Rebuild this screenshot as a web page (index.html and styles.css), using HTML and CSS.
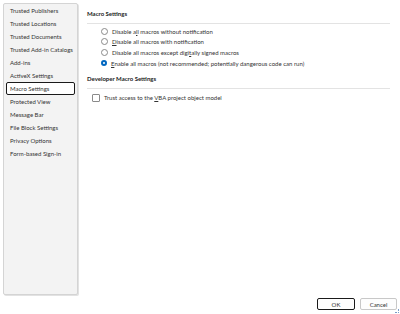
FILE: index.html
```html
<!DOCTYPE html>
<html lang="en">
<head>
    <meta charset="UTF-8">
    <title>Trust Center</title>
    <link rel="stylesheet" href="styles.css">
</head>
<body>

    <div class="dialog">
        <div class="main">
            <ul class="nav">
                <li>Trusted Publishers</li>
                <li>Trusted Locations</li>
                <li>Trusted Documents</li>
                <li>Trusted Add-in Catalogs</li>
                <li>Add-ins</li>
                <li>ActiveX Settings</li>
                <li class="selected">Macro Settings</li>
                <li>Protected View</li>
                <li>Message Bar</li>
                <li>File Block Settings</li>
                <li>Privacy Options</li>
                <li>Form-based Sign-in</li>
            </ul>

            <div class="content">
                <div class="section-title">Macro Settings</div>
                <div class="options">
                    <label class="option"><span class="radio"></span><span>Disable a<u>l</u>l macros without notification</span></label>
                    <label class="option"><span class="radio"></span><span><u>D</u>isable all macros with notification</span></label>
                    <label class="option"><span class="radio"></span><span>Disable all macros except digi<u>t</u>ally signed macros</span></label>
                    <label class="option"><span class="radio checked"></span><span><u>E</u>nable all macros (not recommended; potentially dangerous code can run)</span></label>
                </div>

                <div class="section-title dev">Developer Macro Settings</div>
                <div class="checks">
                    <label class="option"><span class="checkbox"></span><span>Trust access to the <u>V</u>BA project object model</span></label>
                </div>
            </div>
        </div>

        <div class="footer">
            <button class="btn default">OK</button>
            <button class="btn">Cancel</button>
            <span class="grip"></span>
        </div>
    </div>

</body>
</html>
```

FILE: styles.css
```css
/* Page */
body {
    margin: 0;
    background: #fff;
    font-family: Lato, "Open Sans", sans-serif;
    font-size: 6px;
    color: #333;
}

.dialog {
    width: 400px;
    height: 314px;
    display: flex;
    flex-direction: column;
    box-sizing: border-box;
    padding: 3px 3px 4px 3px;
}

.main {
    flex: 1;
    display: flex;
}

/* Left navigation */
.nav {
    list-style: none;
    margin: 0 0 1px 0;
    padding: 0 2px;
    width: 69px;
    background: #f3f3f3;
    border: 1px solid #d4d4d4;
    border-radius: 2px;
    box-shadow: 1px 1px 0 #e2e2e2;
}

.nav li {
    height: 13px;
    line-height: 11px;
    padding-left: 3px;
    white-space: nowrap;
    border: 1px solid transparent;
    box-sizing: border-box;
}

.nav li.selected {
    border: 1px solid #1a1a1a;
    border-radius: 2px;
    background: #fff;
}

/* Right content */
.content {
    flex: 1;
    padding: 7px 7px 0 9px;
}

.section-title {
    font-weight: bold;
    color: #222;
    line-height: 8px;
    padding-bottom: 5px;
    border-bottom: 1px solid #e3e3e3;
    margin-bottom: 2px;
}

.section-title.dev {
    margin-top: 7px;
    margin-bottom: 3px;
}

.options {
    padding-left: 14px;
}

.checks {
    padding-left: 5px;
}

.option {
    display: flex;
    align-items: center;
    height: 10.6px;
    white-space: pre;
}

.radio {
    width: 5px;
    height: 5px;
    border: 1px solid #8a8a8a;
    border-radius: 50%;
    margin-right: 4px;
}

.radio.checked {
    width: 2px;
    height: 2px;
    border: 2.5px solid #0067c0;
}

.checkbox {
    width: 6px;
    height: 6px;
    border: 1px solid #8a8a8a;
    border-radius: 1px;
    margin-right: 4px;
}

/* Footer */
.footer {
    display: flex;
    justify-content: flex-end;
    align-items: center;
    gap: 5px;
    padding-top: 2px;
    position: relative;
}

.btn {
    width: 37px;
    height: 12px;
    padding: 0;
    font-family: inherit;
    font-size: 6px;
    color: #333;
    background: #fdfdfd;
    border: 1px solid #c8c8c8;
    border-radius: 2px;
}

.btn.default {
    width: 38px;
    border: 1px solid #1a1a1a;
    box-shadow: inset 0 0 0 1px #fff;
}

.grip {
    position: absolute;
    right: -2px;
    bottom: -3px;
    width: 3px;
    height: 3px;
    border-right: 1px dotted #7a9ac8;
    border-bottom: 1px dotted #7a9ac8;
}
```
